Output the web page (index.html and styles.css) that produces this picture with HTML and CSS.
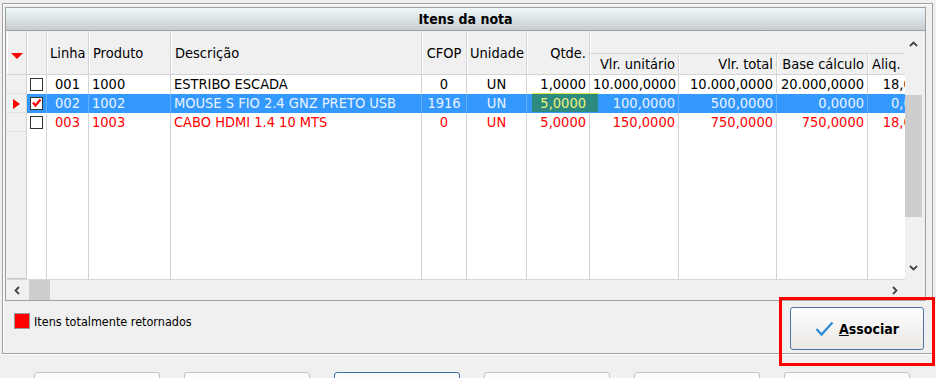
FILE: index.html
```html
<!DOCTYPE html>
<html>
<head>
<meta charset="utf-8">
<title>Itens da nota</title>
<link rel="stylesheet" href="styles.css">
</head>
<body>

<div class="frame">
  <div class="grid">
    <div class="grid-title">Itens da nota</div>
    <div class="grid-body">
      <div class="grid-view">
        <table class="items">
          <colgroup>
            <col style="width:20px"><col style="width:20px"><col style="width:42px"><col style="width:82px">
            <col style="width:251px"><col style="width:45px"><col style="width:60px"><col style="width:63px">
            <col style="width:89px"><col style="width:98px"><col style="width:91px"><col style="width:56px">
          </colgroup>
          <thead>
            <tr class="head-top">
              <th rowspan="2" class="ind"><span class="tri-down"></span></th>
              <th rowspan="2"></th>
              <th rowspan="2" class="c">Linha</th>
              <th rowspan="2" class="l">Produto</th>
              <th rowspan="2" class="l">Descrição</th>
              <th rowspan="2" class="c">CFOP</th>
              <th rowspan="2" class="c">Unidade</th>
              <th rowspan="2" class="r">Qtde.</th>
              <th colspan="4" class="group"></th>
            </tr>
            <tr class="head-sub">
              <th class="r">Vlr. unitário</th>
              <th class="r">Vlr. total</th>
              <th class="r">Base cálculo</th>
              <th class="l">Aliq.</th>
            </tr>
          </thead>
          <tbody>
            <tr>
              <td class="ind"></td>
              <td class="cbx"><span class="cb"></span></td>
              <td class="c">001</td><td class="l">1000</td><td class="l">ESTRIBO ESCADA</td>
              <td class="c">0</td><td class="c">UN</td><td class="r">1,0000</td>
              <td class="r">10.000,0000</td><td class="r">10.000,0000</td><td class="r">20.000,0000</td><td class="r">18,00</td>
            </tr>
            <tr class="selected">
              <td class="ind"><span class="tri-right"></span></td>
              <td class="cbx"><span class="cb checked"><svg width="11" height="11" viewBox="0 0 11 11"><polyline points="2,4.5 4.5,7.5 9.5,1.5" fill="none" stroke="#f00" stroke-width="2.2"/></svg></span></td>
              <td class="c">002</td><td class="l">1002</td><td class="l">MOUSE S FIO 2.4 GNZ PRETO USB</td>
              <td class="c">1916</td><td class="c">UN</td><td class="r qty"><span class="editor">5,0000</span></td>
              <td class="r">100,0000</td><td class="r">500,0000</td><td class="r">0,0000</td><td class="r">0,00</td>
            </tr>
            <tr class="returned">
              <td class="ind"></td>
              <td class="cbx"><span class="cb"></span></td>
              <td class="c">003</td><td class="l">1003</td><td class="l">CABO HDMI 1.4 10 MTS</td>
              <td class="c">0</td><td class="c">UN</td><td class="r">5,0000</td>
              <td class="r">150,0000</td><td class="r">750,0000</td><td class="r">750,0000</td><td class="r">18,00</td>
            </tr>
            <tr class="filler">
              <td class="ind"></td><td></td><td></td><td></td><td></td><td></td>
              <td></td><td></td><td></td><td></td><td></td><td></td>
            </tr>
          </tbody>
        </table>
      </div>
      <div class="vscroll">
        <div class="arrow"><svg width="9" height="6" viewBox="0 0 9 6"><polyline points="1,5 4.5,1.5 8,5" fill="none" stroke="#444" stroke-width="1.8"/></svg></div>
        <div class="vtrack"><div class="vthumb"></div></div>
        <div class="arrow"><svg width="9" height="6" viewBox="0 0 9 6"><polyline points="1,1 4.5,4.5 8,1" fill="none" stroke="#444" stroke-width="1.8"/></svg></div>
      </div>
    </div>
    <div class="hscroll">
      <div class="htrack">
        <div class="harrow"><svg width="6" height="9" viewBox="0 0 6 9"><polyline points="5,1 1.5,4.5 5,8" fill="none" stroke="#444" stroke-width="1.8"/></svg></div>
        <div class="hthumb"></div>
        <div class="harrow right"><svg width="6" height="9" viewBox="0 0 6 9"><polyline points="1,1 4.5,4.5 1,8" fill="none" stroke="#444" stroke-width="1.8"/></svg></div>
      </div>
      <div class="corner"></div>
    </div>
  </div>

  <div class="footer">
    <div class="legend"><span class="swatch"></span>Itens totalmente retornados</div>
    <div class="action">
      <button class="btn-associar">
        <svg width="19" height="16" viewBox="0 0 19 16"><polyline points="1.5,8 6.5,13.5 17.5,1.5" fill="none" stroke="#2b8ad8" stroke-width="2.2"/></svg>
        <span><u>A</u>ssociar</span>
      </button>
      <div class="highlight"></div>
    </div>
  </div>
</div>

<div class="buttons">
  <span class="btn"></span><span class="btn"></span><span class="btn focus"></span>
  <span class="btn"></span><span class="btn"></span><span class="btn"></span>
</div>

</body>
</html>
```

FILE: styles.css
```css
html, body { margin: 0; height: 378px; overflow: hidden; background: #f0f0f0; }
body { font-family: "DejaVu Sans Condensed", "DejaVu Sans", sans-serif; font-stretch: condensed;
       font-size: 14.5px; color: #000; }

.frame { position: relative; box-sizing: border-box; width: 931px; height: 351px; margin: 3px 0 0 2px;
         padding: 3px 0 0 2px; border: 1px solid #a0a0a0; box-shadow: 0 1px 0 #fff, inset 1px 1px 0 #fff; }

.grid { box-sizing: border-box; width: 921px; border: 1px solid #a0a0a0; background: #f0f0f0; }
.grid-title { height: 22px; line-height: 22px; border-bottom: 1px solid #a0a0a0; text-align: center;
              font-weight: bold; font-size: 14px; background: linear-gradient(#eef8fb, #c8cdd1); }
.grid-body { display: flex; padding: 0 1px; }
.grid-view { width: 898px; height: 248px; overflow: hidden; background: #fff; border-bottom: 1px solid #d8d8d8; }

.items { table-layout: fixed; width: 917px; border-collapse: separate; border-spacing: 0; }
.items th, .items td { padding: 0 3px; white-space: nowrap; overflow: hidden; border-right: 1px solid #d4d4d4; }
.items th { font-weight: normal; background: #f0f0f0; border-bottom: 1px solid #d4d4d4; box-shadow: inset 1px 0 0 #fff; }
.head-top { height: 23px; }
.head-sub { height: 21px; }
.items td { height: 19px; line-height: 19px; }
.c { text-align: center; }
.l { text-align: left; }
.r { text-align: right; }
.items th.l { padding-left: 4px; }
.items .ind { padding: 0; background: #f0f0f0; text-align: center; }
.items td.ind { text-align: left; padding-left: 6px; box-shadow: inset 0 -1px 0 #e2e2e2; }
.items .cbx { padding: 0; text-align: center; }

.tri-down { display: inline-block; margin-top: 4px; border-left: 6px solid transparent; border-right: 6px solid transparent;
            border-top: 6px solid #f00; vertical-align: middle; }
.tri-right { display: inline-block; border-top: 5px solid transparent; border-bottom: 5px solid transparent;
             border-left: 7px solid #f00; vertical-align: middle; }

.cb { display: inline-block; box-sizing: border-box; width: 13px; height: 13px; border: 1px solid #333;
      background: #fff; vertical-align: middle; margin-top: -2px; }
.cb svg { display: block; }

.selected td { background: #3399ff; color: #eaf3ff; border-right-color: #62b0ff; }
.selected td.ind { background: #f0f0f0; border-right-color: #d4d4d4; }
.returned td { color: #f00; }
.items td.qty { position: relative; overflow: visible; }
.editor { position: absolute; left: 5px; top: -1px; width: 66px; height: 19px; box-sizing: border-box;
          padding-right: 12px; line-height: 19px; text-align: right; color: #eef27a;
          background: #2c8a7e; border-top: 1px solid #dfe64a; }
.filler td { height: 147px; }
.filler td.ind { box-shadow: inset 0 -1px 0 #c8c8c8; }

.vscroll { width: 17px; height: 249px; display: flex; flex-direction: column; background: #f0f0f0; }
.arrow { height: 25px; display: flex; align-items: center; justify-content: center; }
.vtrack { flex: 1; }
.vthumb { margin-top: 39px; height: 122px; background: #cdcdcd; }

.hscroll { display: flex; height: 20px; padding: 0 1px; }
.htrack { width: 898px; display: flex; align-items: stretch; }
.harrow { width: 20px; display: flex; align-items: center; justify-content: center; }
.harrow.right { margin-left: auto; }
.hthumb { width: 21px; margin-left: 2px; background: #cdcdcd; }
.corner { width: 17px; }

.footer { display: flex; justify-content: space-between; align-items: flex-start; margin-top: 6px;
          padding: 0 8px 0 9px; }
.legend { display: flex; align-items: center; gap: 4px; margin-top: 6px; font-size: 12.5px; }
.swatch { width: 16px; height: 16px; box-sizing: border-box; background: #f00; border: 1px solid #9a9a9a; }
.action { position: relative; }
.btn-associar { display: flex; align-items: center; justify-content: center; gap: 5px; width: 134px; height: 43px;
                margin: 0; padding: 0; border: 1px solid #4a76a6; border-radius: 3px;
                background: linear-gradient(#fefefe, #ebe8e5); font-family: inherit; font-size: 14px;
                font-weight: bold; color: #000; }
.btn-associar u { text-decoration-thickness: 1px; }
.highlight { position: absolute; left: -11px; top: -10px; right: -11px; bottom: -16px; border: 3px solid #f00; }

.buttons { display: flex; gap: 24px; padding-left: 34px; margin-top: 18px; }
.btn { width: 126px; height: 24px; box-sizing: border-box; border: 1px solid #c8c5c0; border-radius: 3px; background: #fbfbfb; }
.btn.focus { border-color: #3d72a8; }
```
